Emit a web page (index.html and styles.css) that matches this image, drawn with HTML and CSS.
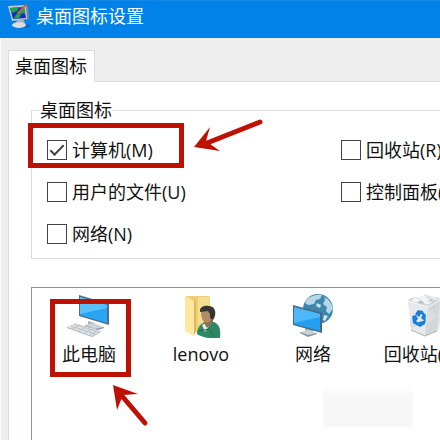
FILE: index.html
```
<!DOCTYPE html>
<html lang="zh-CN">
<head>
    <meta charset="UTF-8">
    <meta name="viewport" content="width=device-width, initial-scale=1.0">
    <title>桌面图标设置</title>
    <link rel="stylesheet" href="styles.css">
</head>
<body>
    <div class="dialog">
        <header class="titlebar">
            <svg class="title-icon" width="24" height="26" viewBox="0 0 24 26" aria-hidden="true">
                <ellipse cx="14" cy="23" rx="8" ry="2" fill="#0868b5"/>
                <path d="M9 16l7 1 1 4-5 2-4-2z" fill="#a5b1b9"/>
                <ellipse cx="11" cy="22" rx="7" ry="3" fill="#d8dcdc"/>
                <path d="M0 3l18-1 2 14-16 2z" fill="#bac8d0"/>
                <path d="M2 5l14-1 2 11-13 1z" fill="#152bc4"/>
                <path d="M2 5l9-1-2 4-5 2zM10 9l6-4 1 6-3-1-3 5-6 1 3-4z" fill="#22a447"/>
                <path d="M9 10l8-9 2 1-7 8z" fill="#b9683f"/>
                <path d="M18 2l2 1 1 13-2 1z" fill="#758995"/>
            </svg>
            <h1>桌面图标设置</h1>
        </header>

        <main class="content">
            <div class="tabs" role="tablist">
                <button class="tab" type="button" role="tab" aria-selected="true">桌面图标</button>
            </div>
            <section class="panel" role="tabpanel">
                <fieldset class="group">
                    <legend>桌面图标</legend>
                    <div class="options">
                        <label class="option option-marked" for="computer"><input type="checkbox" id="computer" checked>计算机(M)</label>
                        <label class="option" for="recycle"><input type="checkbox" id="recycle">回收站(R)</label>
                        <label class="option" for="files"><input type="checkbox" id="files">用户的文件(U)</label>
                        <label class="option" for="control"><input type="checkbox" id="control">控制面板(O)</label>
                        <label class="option" for="network"><input type="checkbox" id="network">网络(N)</label>
                    </div>
                </fieldset>

                <ul class="icon-list">
                    <li class="icon-item icon-marked">
                        <svg width="46" height="44" viewBox="0 0 46 44" aria-hidden="true">
                            <path d="M22 27l7 2v5h-7z" fill="#aab2b8"/>
                            <path d="M19 31l8-2 11 4-9 3z" fill="#cdd3d7"/>
                            <path d="M19 31l10 4 9-2v1l-9 3-10-4z" fill="#8b969d"/>
                            <path d="M13 1l30 9v21l-30-9z" fill="#506e82"/>
                            <path d="M14 3l27 8v18l-27-8z" fill="#28a5f4"/>
                            <path d="M14 3l27 8v3L14 20z" fill="#5ac0fa"/>
                            <path d="M1 33l8-4 26 8-9 5z" fill="#e1e4e6"/>
                            <path d="M1 33l25 9 9-5v1l-9 5-25-9z" fill="#a6aeb4"/>
                            <path d="M5 32l24 8M8 30l24 8M7 35l7-4M13 37l7-4M19 39l7-4M24 41l7-4" fill="none" stroke="#b9c0c5"/>
                        </svg>
                        <span>此电脑</span>
                    </li>
                    <li class="icon-item">
                        <svg width="46" height="44" viewBox="0 0 46 44" aria-hidden="true">
                            <path d="M8 2h24v33l-15 4-9-3z" fill="#edcf76"/>
                            <path d="M20 3h12v31l-12 4z" fill="#f6dd90"/>
                            <path d="M7 2l9 5v35l-9-5z" fill="#ffe7a0"/>
                            <path d="M16 7l2-1v30l-2 6z" fill="#e0b858"/>
                            <path d="M19 40c0-8 5-11 10-13l7 1c5 2 7 7 6 16-8 1-17 0-23-4z" fill="#2e8865"/>
                            <path d="M24 31l4-2 3 3-4 6z" fill="#e5f0ed"/>
                            <path d="M26 24h9v4l-6 6-3-5z" fill="#967151"/>
                            <path d="M23 17c0-5 11-6 12 2 0 6-3 10-7 9-4 0-5-6-5-11z" fill="#b28b65"/>
                            <path d="M22 18c-1-6 6-7 9-6 7 0 8 9 4 14l-3-2v-4l-2-3z" fill="#383633"/>
                            <path d="M21 37l10-2 6 8" fill="none" stroke="#226e50"/>
                        </svg>
                        <span>lenovo</span>
                    </li>
                    <li class="icon-item">
                        <svg width="46" height="44" viewBox="0 0 46 44" aria-hidden="true">
                            <circle cx="28" cy="15" r="15" fill="#3d86ad"/>
                            <path d="M15 8c4-6 11-8 17-7l-2 4-4 1-2 4-5 1-3-1zM34 3c5 2 8 7 9 12l-4 5-3-3 1-4-4-3 2-4z" fill="#b6d6e5"/>
                            <path d="M27 9l4 2-1 3-4-2zM34 21l4 1-3 5-2-1z" fill="#d0e5ee"/>
                            <path d="M15 33h8v6h-8z" fill="#abb4ba"/>
                            <path d="M10 38l9-2 8 3-9 3z" fill="#cad2d8"/>
                            <path d="M10 38l8 3 9-2v1l-9 3-8-4z" fill="#89959d"/>
                            <path d="M3 11l29 8v20L3 31z" fill="#47697f"/>
                            <path d="M4 13l26 7v17L4 30z" fill="#249ff2"/>
                            <path d="M4 13l26 7v3L4 29z" fill="#4db7fb"/>
                        </svg>
                        <span>网络</span>
                    </li>
                    <li class="icon-item">
                        <svg width="46" height="44" viewBox="0 0 46 44" aria-hidden="true">
                            <path d="M6 6l7-3 5 1 5-4 8 3 9 1-3 32-14 6-13-6z" fill="#dfe2e4"/>
                            <path d="M6 6l7-3 6 4 5-5 7 5 8-2-11 9z" fill="#c9ced1"/>
                            <path d="M9 7l4-4 4 3 5-5 5 4 8-1-9 7z" fill="#f2f3f4"/>
                            <path d="M15 9l4-3 4 4zM25 8l4-3 4 1z" fill="#b7bec2"/>
                            <path d="M6 7l20 6 12-7-3 31-12 5-14-6z" fill="#e6e9eb"/>
                            <path d="M26 13l12-7-3 31-12 5z" fill="#d2d7da"/>
                            <path d="M8 24l8 7-7 4zM26 13l8 10-10 8z" fill="#dadee1"/>
                            <path d="M6 7l20 6 12-7" fill="none" stroke="#fafafa"/>
                            <path d="M9 36l14 6 12-5" fill="none" stroke="#aeb5b9"/>
                            <path d="M13 20l3-4 5 1 1 4-3-1-2 3zM21 18l3 3-1 6-4-3 1-2zM10 22l4-1 2 4-2 2 3 2-1 3-5-3zM17 28l4-1 3-2-1 5-5 3-3-2z" fill="#1681dc"/>
                        </svg>
                        <span>回收站(满)</span>
                    </li>
                </ul>
            </section>
        </main>

        <div class="smudge"></div>
        <svg class="arrow arrow-option" width="70" height="36" viewBox="0 0 70 36" aria-hidden="true">
            <path d="M67 4L14 25" fill="none" stroke="#bf1004" stroke-width="5" stroke-linecap="round"/>
            <path d="M1 29L17 9l-4 14 14 10z" fill="#bf1004"/>
        </svg>
        <svg class="arrow arrow-item" width="38" height="44" viewBox="0 0 38 44" aria-hidden="true">
            <path d="M33 39L10 12" fill="none" stroke="#bf1004" stroke-width="5" stroke-linecap="round"/>
            <path d="M1 1l25 9-15 1-6 15z" fill="#bf1004"/>
        </svg>
    </div>
</body>
</html>
```
FILE: styles.css
```
*,
*::before,
*::after {
    box-sizing: border-box;
}
body {
    margin: 0;
    background-color: #fff;
    color: #111;
    font-family: "Open Sans", "Noto Sans CJK SC", sans-serif;
    font-size: 18px;
    line-height: 24px;
}
.dialog {
    position: relative;
    display: flex;
    flex-direction: column;
    min-height: 100vh;
    overflow: hidden;
    white-space: nowrap;
}
.titlebar {
    display: flex;
    align-items: center;
    gap: 4px;
    height: 38px;
    padding: 0 8px 8px;
    border-top: 1px solid #168be8;
    background-color: #0082e8;
    color: #fff;
}
.titlebar h1 {
    margin: 0;
    font-size: 18px;
    font-weight: normal;
}
.content {
    display: flex;
    flex: 1;
    flex-direction: column;
    padding: 12px 0 0 7px;
    border-left: 1px solid #fafafa;
    background-color: #eee;
}
.tabs {
    display: flex;
}
.tab {
    position: relative;
    z-index: 1;
    height: 32px;
    margin-bottom: -1px;
    padding: 0 7px 2px 6px;
    border: 1px solid #dcdcdc;
    border-bottom: none;
    background-color: #fff;
    color: inherit;
    font: inherit;
}
.panel {
    display: flex;
    flex: 1;
    flex-direction: column;
    padding: 16px 0 0 22px;
    border: 1px solid #dcdcdc;
    border-width: 1px 0 0 1px;
    background-color: #fff;
}
.group {
    min-width: 0;
    margin: 0;
    padding: 16px 0 12px 15px;
    border: 1px solid #dcdcdc;
    border-right: none;
}
.group legend {
    margin-left: -8px;
    padding: 0 1px;
}
.options {
    display: grid;
    grid-template-columns: 294px auto;
    row-gap: 18px;
}
.option {
    position: relative;
    display: flex;
    align-items: center;
    gap: 5px;
    justify-self: start;
}
.option input {
    display: grid;
    place-items: center;
    width: 20px;
    height: 20px;
    margin: 0;
    border: 1px solid #444;
    background-color: #fff;
    appearance: none;
}
.option input:checked::before {
    content: "";
    width: 14px;
    height: 7px;
    margin-top: -4px;
    border: solid #444;
    border-width: 0 0 2px 2px;
    transform: rotate(-45deg);
}
.icon-list {
    display: flex;
    flex: 1;
    margin: 28px 0 0;
    padding: 6px 0 0 1px;
    border: 1px solid #8a929b;
    border-width: 1px 0 0 1px;
    list-style: none;
}
.icon-item {
    position: relative;
    display: flex;
    flex: 0 0 112px;
    flex-direction: column;
    align-items: center;
    gap: 4px;
}
/* red call-out frames */
.option-marked::after,
.icon-marked::after {
    content: "";
    position: absolute;
    border: 5px solid #bf1004;
}
.option-marked::after {
    top: -15px;
    left: -19px;
    width: 156px;
    height: 45px;
}
.icon-marked::after {
    top: 5px;
    left: 17px;
    width: 81px;
    height: 78px;
}
.arrow {
    position: absolute;
}
.arrow-option {
    top: 118px;
    left: 193px;
}
.arrow-item {
    top: 384px;
    left: 112px;
}
.smudge {
    position: absolute;
    top: 385px;
    left: 323px;
    width: 90px;
    height: 42px;
    background: linear-gradient(#fefefe, #f7f7f7 40%);
}
```
